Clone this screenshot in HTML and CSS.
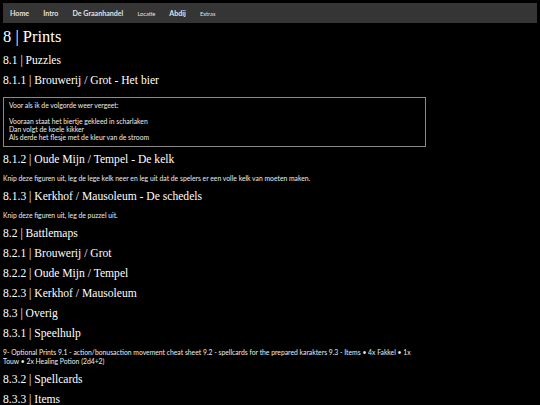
FILE: index.html
```html
<!DOCTYPE html>
<html lang="nl">
<head>
<meta charset="utf-8">
<title>Prints</title>
<link rel="stylesheet" href="styles.css">
</head>
<body>
<nav class="topnav">
  <a class="nav-item" href="#">Home</a>
  <a class="nav-item" href="#">Intro</a>
  <a class="nav-item" href="#">De Graanhandel</a>
  <a class="nav-item small" href="#">Locatie</a>
  <a class="nav-item" href="#">Abdij</a>
  <a class="nav-item small" href="#">Extras</a>
</nav>
<main class="content">
  <h1 class="h1">8 | Prints</h1>
  <h2 class="h2">8.1 | Puzzles</h2>
  <h3 class="h3">8.1.1 | Brouwerij / Grot - Het bier</h3>
  <div class="note">
    <div class="note-line">Voor als ik de volgorde weer vergeet:</div>
    <div class="note-line">&nbsp;</div>
    <div class="note-line">Vooraan staat het biertje gekleed in scharlaken</div>
    <div class="note-line">Dan volgt de koele kikker</div>
    <div class="note-line">Als derde het flesje met de kleur van de stroom</div>
  </div>
  <h3 class="h3">8.1.2 | Oude Mijn / Tempel - De kelk</h3>
  <p class="para">Knip deze figuren uit, leg de lege kelk neer en leg uit dat de spelers er een volle kelk van moeten maken.</p>
  <h3 class="h3">8.1.3 | Kerkhof / Mausoleum - De schedels</h3>
  <p class="para">Knip deze figuren uit, leg de puzzel uit.</p>
  <h2 class="h2">8.2 | Battlemaps</h2>
  <h3 class="h3">8.2.1 | Brouwerij / Grot</h3>
  <h3 class="h3">8.2.2 | Oude Mijn / Tempel</h3>
  <h3 class="h3">8.2.3 | Kerkhof / Mausoleum</h3>
  <h2 class="h2">8.3 | Overig</h2>
  <h3 class="h3">8.3.1 | Speelhulp</h3>
  <p class="para">9- Optional Prints 9.1 - action/bonusaction movement cheat sheet 9.2 - spellcards for the prepared karakters 9.3 - Items • 4x Fakkel • 1x Touw • 2x Healing Potion (2d4+2)</p>
  <h3 class="h3">8.3.2 | Spellcards</h3>
  <h3 class="h3">8.3.3 | Items</h3>
</main>
</body>
</html>
```

FILE: styles.css
```css
html, body {
  margin: 0;
  padding: 0;
  background: #000;
  color: #fff;
}
body {
  padding: 3px;
  font-family: "Lato", "Open Sans", sans-serif;
}
.topnav {
  display: flex;
  align-items: center;
  height: 20px;
  padding: 0;
  background: #353535;
}
.nav-item {
  padding: 0 7px;
  color: #e0e0e0;
  text-decoration: none;
  font-size: 7.1px;
  font-weight: 700;
}
.nav-item.small {
  font-size: 5.7px;
  font-weight: 400;
}
.content {
  width: 423px;
}
.h1, .h2, .h3 {
  margin: 0;
  font-family: "Liberation Serif", serif;
  font-weight: 400;
  color: #fff;
}
.h1 {
  font-size: 16.5px;
  line-height: 28px;
}
.h2, .h3 {
  font-size: 11.6px;
  line-height: 20px;
}
.h2 {
  line-height: 20px;
}
.note {
  margin: 6px 0 3px;
  padding: 3px 5px 5px;
  border: 1px solid #8a8a8a;
  font-size: 6.8px;
  line-height: 8px;
  color: #ececec;
}
.para {
  margin: 4px 0;
  font-size: 6.8px;
  line-height: 9px;
  color: #ececec;
}
```
